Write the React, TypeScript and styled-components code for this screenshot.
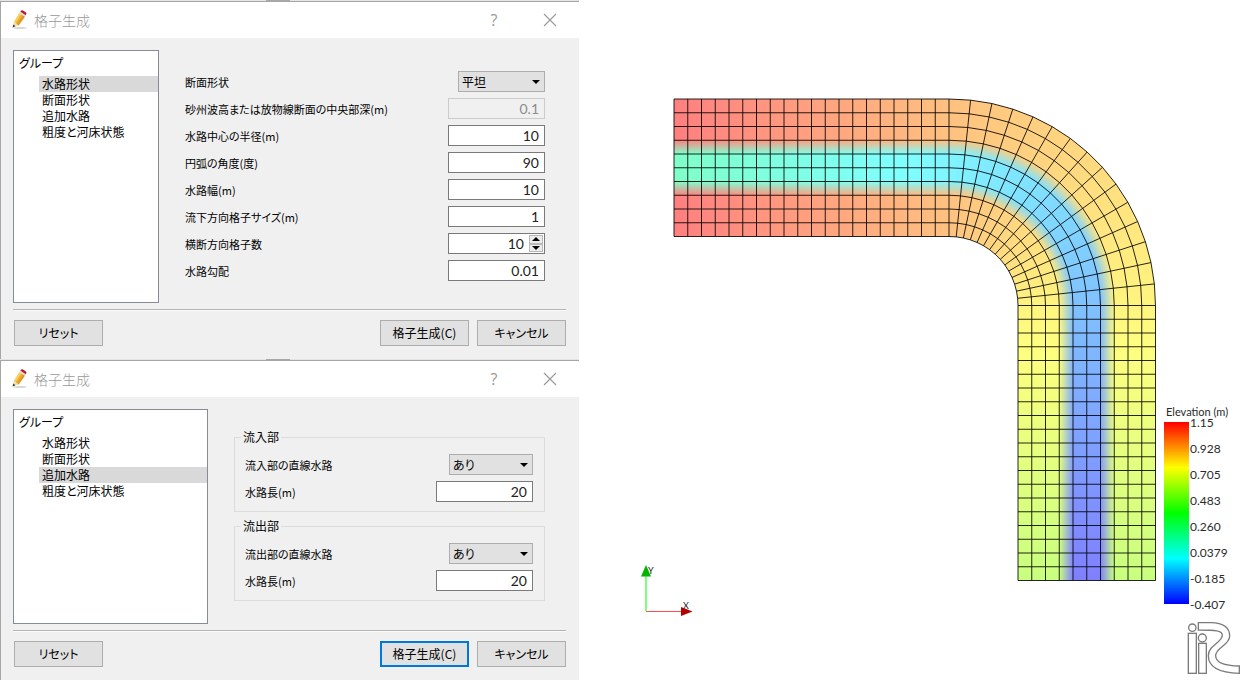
import React, { useId } from "react";
import styled, { createGlobalStyle } from "styled-components";

const GlobalStyle = createGlobalStyle`
  * { box-sizing: border-box; }
  body {
    margin: 0;
    background: #ffffff;
    color: #000000;
    font-family: "Noto Sans CJK JP", sans-serif;
    font-size: 12px;
    line-height: 16px;
    font-feature-settings: "palt";
  }
  button, input, select { font: inherit; font-feature-settings: inherit; color: inherit; margin: 0; }
`;

const Page = styled.main`
  display: grid;
  grid-template-columns: minmax(480px, 579fr) 672fr;
  align-items: start;
`;

/* ---------- dialog window ---------- */

const Strip = styled.div`
  height: 1px;
  padding-left: 46%;
  background: #e4e4e4;
  &::before {
    content: "";
    display: block;
    width: 24px;
    height: 1px;
    background: #a8a8a8;
  }
`;

const Window = styled.section`
  border-top: 1px solid #a6a6a6;
  border-left: 1px solid #a6a6a6;
  background: #f0f0f0;
`;

const TitleBar = styled.header`
  display: flex;
  align-items: center;
  height: 36px;
  padding: 0 13px 0 9px;
  background: #ffffff;
  color: #999999;
`;

const Title = styled.h2`
  flex: 1;
  margin: 0 0 0 4px;
  font-size: 14px;
  line-height: 20px;
  font-weight: 300;
`;

const TitleButton = styled.button`
  display: grid;
  place-items: center;
  width: 32px;
  height: 28px;
  padding: 0;
  border: 0;
  background: none;
  color: #999999;
  font-family: "Open Sans", sans-serif;
  font-size: 16px;
  & + & { margin-left: 24px; }
`;

const Body = styled.div`
  padding: 12px 13px 13px 12px;
`;

const Content = styled.div<{ $list: number }>`
  display: grid;
  grid-template-columns: ${(p) => p.$list}px 1fr;
  column-gap: 26px;
  padding-right: 21px;
`;

const Tree = styled.nav<{ $height: number }>`
  min-height: ${(p) => p.$height}px;
  padding: 4px 0 0;
  border: 1px solid #868b96;
  background: #ffffff;
`;

const TreeHead = styled.div`
  height: 21px;
  padding-left: 5px;
`;

const TreeList = styled.ul`
  margin: 0;
  padding: 0 0 0 25px;
  list-style: none;
`;

const TreeItem = styled.button<{ $active: boolean }>`
  display: block;
  width: 100%;
  height: 16px;
  padding: 0 3px;
  border: 0;
  text-align: left;
  line-height: 16px;
  background: ${(p) => (p.$active ? "#d9d9d9" : "transparent")};
`;

const Divider = styled.hr`
  height: 2px;
  margin: 6px 0 9px;
  border: 0;
  border-top: 1px solid #b4b4b4;
  background: #fafafa;
`;

const Footer = styled.footer`
  display: flex;
  gap: 8px;
  padding: 0 0 0 1px;
`;

const PushButton = styled.button<{ $primary?: boolean }>`
  width: 89px;
  height: 26px;
  padding: 0;
  border: ${(p) => (p.$primary ? "2px solid #0078d7" : "1px solid #adadad")};
  background: #e1e1e1;
  &:first-child { margin-right: auto; }
`;

/* ---------- form parts ---------- */

const Form = styled.form<{ $top: number }>`
  display: flex;
  flex-direction: column;
  padding-top: ${(p) => p.$top}px;
`;

const Row = styled.div`
  display: flex;
  align-items: center;
  justify-content: space-between;
  height: 27px;
  label { font-size: 11px; }
`;

const TextInput = styled.input`
  width: 97px;
  height: 21px;
  padding: 0 5px;
  border: 1px solid #7a7a7a;
  border-radius: 0;
  background: #ffffff;
  color: #222222;
  font-family: Lato, sans-serif;
  font-size: 14px;
  text-align: right;
  &:disabled {
    border-color: #cccccc;
    background: #f0f0f0;
    color: #8c8c8c;
  }
`;

const SpinBox = styled.div`
  display: flex;
  width: 97px;
  height: 21px;
  padding: 1px;
  border: 1px solid #7a7a7a;
  background: #ffffff;
`;

const SpinInput = styled(TextInput)`
  flex: 1;
  width: 0;
  height: 17px;
  border: 0;
`;

const SpinButtons = styled.div`
  display: grid;
  grid-template-rows: 1fr 1fr;
  width: 14px;
`;

const SpinButton = styled.button`
  display: grid;
  place-items: center;
  min-height: 0;
  padding: 0;
  border: 1px solid #b8b8b8;
  background: #ececec;
  svg { display: block; }
`;

const SelectBox = styled.div<{ $width: number }>`
  display: grid;
  align-items: center;
  width: ${(p) => p.$width}px;
  height: 21px;
  select, svg { grid-area: 1 / 1; }
  svg { justify-self: end; margin-right: 5px; pointer-events: none; }
`;

const NativeSelect = styled.select`
  appearance: none;
  width: 100%;
  height: 21px;
  padding: 0 3px;
  border: 1px solid #adadad;
  border-radius: 0;
  background: #e1e1e1;
  line-height: 16px;
`;

const Group = styled.fieldset`
  min-width: 0;
  margin: 0 0 7px;
  padding: 7px 11px 6px 10px;
  border: 1px solid #dcdcdc;
`;

const Legend = styled.legend`
  margin-left: -4px;
  padding: 0 2px;
  line-height: 14px;
`;

/* ---------- 3D view ---------- */

const View = styled.section`
  position: relative;
  background: #ffffff;
`;

const Scene = styled.svg`
  display: block;
  width: 100%;
  height: auto;
`;

const ScalePanel = styled.aside`
  position: absolute;
  top: 407px;
  right: 10px;
  display: flex;
  flex-direction: column;
  width: 77px;
  color: #2a2a2a;
  font-family: Lato, sans-serif;
`;

const ScaleTitle = styled.h3`
  margin: 0 0 0 2px;
  font-size: 11px;
  line-height: 10px;
  font-weight: 400;
  white-space: nowrap;
`;

const ScaleBody = styled.div`
  display: flex;
  gap: 1px;
  margin-bottom: 10px;
`;

const ScaleBar = styled.div`
  width: 25px;
  height: 182px;
  margin-top: 5px;
  background: linear-gradient(#ff0000, #ffff00 25%, #00ff00 50%, #00ffff 75%, #0000ff);
`;

const ScaleLabels = styled.ol`
  display: flex;
  flex-direction: column;
  justify-content: space-between;
  height: 194px;
  margin: 0;
  padding: 0;
  list-style: none;
  font-size: 12px;
  line-height: 12px;
`;

const LogoMark = styled.svg`
  display: block;
  align-self: flex-end;
`;

/* ---------- small drawings ---------- */

const PencilIcon = () => (
  <svg width="20" height="20" viewBox="0 0 20 20" aria-hidden="true">
    <ellipse cx="10" cy="18" rx="7" ry="0.900" fill="#d8d8d8" />
    <path d="M4 12 9.500 3 15 6.500 8.500 15.500Z" fill="#f0b030" />
    <path d="M4 12 9.500 3 11.300 4.100 5.500 13Z" fill="#fad264" />
    <path d="M13 5.300 15 6.500 8.500 15.500 7 14.400Z" fill="#e0982a" />
    <path d="M10.200 1.800 11.300 0.500Q12 0 13 0.600L16 2.500Q16.800 3.200 16.300 4L15.500 5.400Z" fill="#b3202c" />
    <path d="M9.400 3.100 10.300 1.700 15.700 5.300 14.900 6.700Z" fill="#dedede" />
    <path d="M4 12 8.500 15.500 2.800 17.200Z" fill="#f1dcb2" />
    <path d="M3.300 14.500 5.400 16.300 2.600 17.400Z" fill="#333333" />
  </svg>
);

const CloseIcon = () => (
  <svg width="14" height="14" viewBox="0 0 14 14" aria-hidden="true">
    <path d="M1 1 13 13M13 1 1 13" stroke="#999999" strokeWidth="1.100" fill="none" />
  </svg>
);

const Arrow = ({ up = false }: { up?: boolean }) => (
  <svg width="8" height="4" viewBox="0 0 8 4" aria-hidden="true">
    <path d={up ? "M0 4H8L4 0Z" : "M0 0H8L4 4Z"} fill="#000000" />
  </svg>
);

/* ---------- controls ---------- */

const NumberRow = ({ label, value, disabled }: { label: string; value: string; disabled?: boolean }) => {
  const id = useId();
  return (
    <Row>
      <label htmlFor={id}>{label}</label>
      <TextInput id={id} type="text" inputMode="decimal" defaultValue={value} disabled={disabled} />
    </Row>
  );
};

const SelectRow = ({ label, value, width }: { label: string; value: string; width: number }) => {
  const id = useId();
  return (
    <Row>
      <label htmlFor={id}>{label}</label>
      <SelectBox $width={width}>
        <NativeSelect id={id} defaultValue={value}>
          <option>{value}</option>
        </NativeSelect>
        <Arrow />
      </SelectBox>
    </Row>
  );
};

const SpinRow = ({ label, value }: { label: string; value: string }) => {
  const id = useId();
  return (
    <Row>
      <label htmlFor={id}>{label}</label>
      <SpinBox>
        <SpinInput id={id} type="text" inputMode="numeric" defaultValue={value} />
        <SpinButtons>
          <SpinButton type="button" aria-label="+"><Arrow up /></SpinButton>
          <SpinButton type="button" aria-label="-"><Arrow /></SpinButton>
        </SpinButtons>
      </SpinBox>
    </Row>
  );
};

const PAGES = ["水路形状", "断面形状", "追加水路", "粗度と河床状態"];

interface DialogProps {
  active: number;
  listWidth: number;
  listHeight: number;
  primary?: boolean;
  children: React.ReactNode;
}

const GridDialog = ({ active, listWidth, listHeight, primary, children }: DialogProps) => (
  <div>
    <Strip />
    <Window>
      <TitleBar>
        <PencilIcon />
        <Title>格子生成</Title>
        <TitleButton type="button">?</TitleButton>
        <TitleButton type="button" aria-label="閉じる"><CloseIcon /></TitleButton>
      </TitleBar>
      <Body>
        <Content $list={listWidth}>
          <Tree $height={listHeight}>
            <TreeHead>グループ</TreeHead>
            <TreeList>
              {PAGES.map((name, i) => (
                <li key={name}>
                  <TreeItem type="button" $active={i === active}>{name}</TreeItem>
                </li>
              ))}
            </TreeList>
          </Tree>
          {children}
        </Content>
        <Divider />
        <Footer>
          <PushButton type="button">リセット</PushButton>
          <PushButton type="button" $primary={primary}>格子生成(C)</PushButton>
          <PushButton type="button">キャンセル</PushButton>
        </Footer>
      </Body>
    </Window>
  </div>
);

/* ---------- channel mesh ---------- */

const CELL = 13.75;
const START_X = 95;
const CX = 370;
const CY = 305.5;
const OUTER = 206.5;
const STRAIGHT = 20;
const BEND = 15;
const ACROSS = 10;
const TOP = CY - OUTER;
const END_Y = CY + STRAIGHT * CELL;
const MIN = -0.407;
const MAX = 1.15;
const BANK = 1.15;
const BED = 0.15;
const ARC_LENGTH = 5 * Math.PI;
const BEND_DROP = ARC_LENGTH * 0.01;

// Half-transparent rainbow: blue at the minimum, red at the maximum.
const colorOf = (z: number) => {
  const t = Math.min(1, Math.max(0, (z - MIN) / (MAX - MIN)));
  return `hsl(${Math.round((1 - t) * 2400) / 10} 100% 75%)`;
};

const radius = (j: number) => OUTER - j * CELL;
const polar = (r: number, deg: number) => {
  const a = (deg * Math.PI) / 180;
  return `${(CX + r * Math.sin(a)).toFixed(2)} ${(CY - r * Math.cos(a)).toFixed(2)}`;
};

const wedge = (r0: number, r1: number, a0: number, a1: number) =>
  `M${polar(r0, a0)}L${polar(r0, a1)}L${polar(r1, a1)}L${polar(r1, a0)}Z`;

const Stops = ({ from, drop }: { from: number; drop: number }) => (
  <>
    {Array.from({ length: 21 }, (_, i) => (
      <stop key={i} offset={i / 20} stopColor={colorOf(from - (drop * i) / 20)} />
    ))}
  </>
);

const ChannelFill = ({ name, base }: { name: string; base: number }) => {
  const pieces = BEND * 4;
  return (
    <g>
      <rect x={START_X} y={TOP} width={CX - START_X} height={ACROSS * CELL} fill={`url(#${name}-in)`} />
      <g shapeRendering="crispEdges">
        {Array.from({ length: pieces }, (_, i) => (
          <path
            key={i}
            d={wedge(OUTER, radius(ACROSS), (i * 90) / pieces, Math.min(90, ((i + 1) * 90) / pieces))}
            fill={colorOf(base - 0.2 - (BEND_DROP * (i + 0.5)) / pieces)}
          />
        ))}
      </g>
      <rect x={CX + radius(ACROSS)} y={CY} width={ACROSS * CELL} height={END_Y - CY} fill={`url(#${name}-out)`} />
    </g>
  );
};

const ACROSS_STOPS: [number, number][] = [[0, 0], [0.3, 0], [0.4, 1], [0.6, 1], [0.7, 0], [1, 0]];

const meshLines = () => {
  const d: string[] = [];
  for (let j = 0; j <= ACROSS; j++) {
    const r = radius(j);
    let line = `M${START_X} ${TOP + j * CELL}`;
    for (let i = 0; i <= BEND; i++) line += `L${polar(r, (i * 90) / BEND)}`;
    d.push(`${line}V${END_Y}`);
  }
  for (let i = 0; i <= STRAIGHT; i++) {
    if (i < STRAIGHT + 1) d.push(`M${START_X + i * CELL} ${TOP}v${ACROSS * CELL}`);
    d.push(`M${CX + radius(ACROSS)} ${CY + i * CELL}h${ACROSS * CELL}`);
  }
  for (let i = 1; i < BEND; i++) {
    const a = (i * 90) / BEND;
    d.push(`M${polar(OUTER, a)}L${polar(radius(ACROSS), a)}`);
  }
  return d.join("");
};

const MeshScene = () => (
  <Scene viewBox="0 0 672 680" role="img" aria-label="Elevation (m)">
    <defs>
      {[["bank", BANK], ["bed", BED]].map(([name, z]) => (
        <React.Fragment key={name}>
          <linearGradient id={`${name}-in`}>
            <Stops from={z as number} drop={0.2} />
          </linearGradient>
          <linearGradient id={`${name}-out`} x1="0" y1="0" x2="0" y2="1">
            <Stops from={(z as number) - 0.2 - BEND_DROP} drop={0.2} />
          </linearGradient>
        </React.Fragment>
      ))}
      <linearGradient id="depth-in" x1="0" y1="0" x2="0" y2="1">
        {ACROSS_STOPS.map(([o, a]) => <stop key={o} offset={o} stopColor="#fff" stopOpacity={a} />)}
      </linearGradient>
      <linearGradient id="depth-out">
        {ACROSS_STOPS.map(([o, a]) => <stop key={o} offset={o} stopColor="#fff" stopOpacity={a} />)}
      </linearGradient>
      <radialGradient id="depth-bend" gradientUnits="userSpaceOnUse" cx={CX} cy={CY} r={OUTER}>
        {[[7, 0], [6, 1], [4, 1], [3, 0]].map(([j, a]) => (
          <stop key={j} offset={radius(j) / OUTER} stopColor="#fff" stopOpacity={a} />
        ))}
      </radialGradient>
      <mask id="depth" maskUnits="userSpaceOnUse" x="0" y="0" width="672" height="680">
        <rect x={START_X} y={TOP} width={CX - START_X} height={ACROSS * CELL} fill="url(#depth-in)" />
        <rect x={CX} y={TOP} width={OUTER} height={OUTER} fill="url(#depth-bend)" />
        <rect x={CX + radius(ACROSS)} y={CY} width={ACROSS * CELL} height={END_Y - CY} fill="url(#depth-out)" />
      </mask>
    </defs>
    <ChannelFill name="bank" base={BANK} />
    <g mask="url(#depth)">
      <ChannelFill name="bed" base={BED} />
    </g>
    <path d={meshLines()} fill="none" stroke="#000000" strokeOpacity="0.85" strokeWidth="1" />

    <path d="M67 576V611" stroke="#55ff55" strokeWidth="1.500" />
    <path d="M67 611.500H103" stroke="#ff4d4d" strokeWidth="1.200" />
    <path d="M67 565 72 576.500H62Z" fill="#00b400" />
    <path d="M113.500 611.500 102 607V616Z" fill="#b40000" />
    <text x="69" y="574" fontFamily="Lato, sans-serif" fontSize="9" fill="#222222">Y</text>
    <text x="104" y="609" fontFamily="Lato, sans-serif" fontSize="9" fill="#222222">X</text>
  </Scene>
);

const SCALE = ["1.15", "0.928", "0.705", "0.483", "0.260", "0.0379", "-0.185", "-0.407"];

const Logo = () => (
  <LogoMark width="54" height="54" viewBox="564 481 162 162" role="img" aria-label="iRIC">
    <g fill="none" stroke="#7c7c7c" strokeWidth="4">
      <circle cx="580" cy="501" r="11" />
      <circle cx="610" cy="532" r="12" />
      <rect x="568" y="518" width="24" height="120" />
      <rect x="599" y="548" width="23" height="90" />
      <path d="M598 486H636C672 487 692 500 692 526C692 554 650 560 650 585C650 606 680 615 721 616V638C662 636 628 618 628 585C628 553 670 546 670 524C670 509 650 508 598 508Z" />
    </g>
  </LogoMark>
);

export default function App() {
  return (
    <>
      <GlobalStyle />
      <Page>
        <div>
          <GridDialog active={0} listWidth={146} listHeight={253}>
            <Form $top={18}>
              <SelectRow label="断面形状" value="平坦" width={87} />
              <NumberRow label="砂州波高または放物線断面の中央部深(m)" value="0.1" disabled />
              <NumberRow label="水路中心の半径(m)" value="10" />
              <NumberRow label="円弧の角度(度)" value="90" />
              <NumberRow label="水路幅(m)" value="10" />
              <NumberRow label="流下方向格子サイズ(m)" value="1" />
              <SpinRow label="横断方向格子数" value="10" />
              <NumberRow label="水路勾配" value="0.01" />
            </Form>
          </GridDialog>
          <GridDialog active={2} listWidth={195} listHeight={215} primary>
            <Form $top={21}>
              <Group>
                <Legend>流入部</Legend>
                <SelectRow label="流入部の直線水路" value="あり" width={84} />
                <NumberRow label="水路長(m)" value="20" />
              </Group>
              <Group>
                <Legend>流出部</Legend>
                <SelectRow label="流出部の直線水路" value="あり" width={84} />
                <NumberRow label="水路長(m)" value="20" />
              </Group>
            </Form>
          </GridDialog>
        </div>
        <View>
          <MeshScene />
          <ScalePanel>
            <ScaleTitle>Elevation (m)</ScaleTitle>
            <ScaleBody>
              <ScaleBar />
              <ScaleLabels>
                {SCALE.map((v) => <li key={v}>{v}</li>)}
              </ScaleLabels>
            </ScaleBody>
            <Logo />
          </ScalePanel>
        </View>
      </Page>
    </>
  );
}
